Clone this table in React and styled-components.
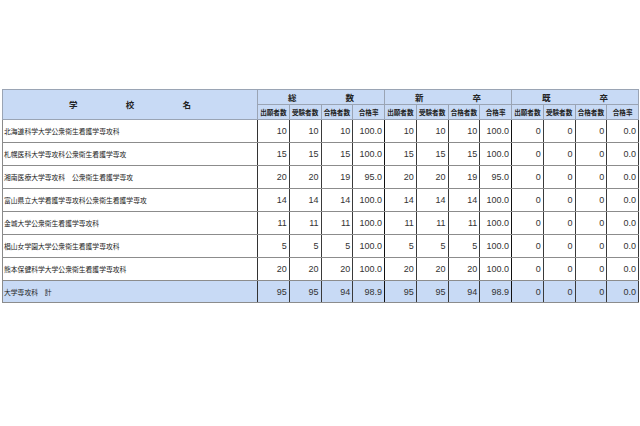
import styled, { createGlobalStyle } from "styled-components";

const GlobalStyle = createGlobalStyle`
  html, body {
    margin: 0;
    padding: 0;
    background: #ffffff;
  }
`;

const Page = styled.div`
  width: 640px;
  height: 426px;
  padding: 89px 0 0 2px;
  box-sizing: border-box;
  background: #fff;
`;

const Table = styled.table`
  border-collapse: collapse;
  table-layout: fixed;
  width: 637px;
  font-family: "Noto Sans CJK JP", "Liberation Sans", sans-serif;
  color: #222;
  border: 1px solid #8a8a8a;
`;

const HeadCell = styled.th`
  background: #c8daf5;
  border: 1px solid #9aa4b4;
  height: 14px;
  padding: 0;
  font-weight: bold;
  font-size: ${(p) => p.$size || 8}px;
  line-height: 1;
  white-space: nowrap;
  overflow: hidden;
`;

const Spread = styled.div`
  display: flex;
  justify-content: space-between;
  padding: 0 ${(p) => p.$pad}px;
`;

const Row = styled.tr`
  background: ${(p) => (p.$total ? "#c8daf5" : "#fff")};
`;

const NameCell = styled.td`
  border-top: 1px solid #8c8c8c;
  border-bottom: 1px solid #8c8c8c;
  border-right: 1px solid #333;
  height: ${(p) => p.$h || 22}px;
  padding: 0 0 0 1px;
  font-size: 6.8px;
  white-space: nowrap;
  overflow: hidden;
`;

const NumCell = styled.td`
  border-top: 1px solid #8c8c8c;
  border-bottom: 1px solid #8c8c8c;
  border-right: 1px solid ${(p) => (p.$groupEnd ? "#111" : "#3a3a3a")};
  padding: 0 2px 0 0;
  text-align: right;
  font-family: "Liberation Sans", sans-serif;
  font-size: 9px;
  color: #333;
  white-space: nowrap;
`;

const schools = [
  ["北海道科学大学公衆衛生看護学専攻科", [10, 10, 10, "100.0"], [10, 10, 10, "100.0"]],
  ["札幌医科大学専攻科公衆衛生看護学専攻", [15, 15, 15, "100.0"], [15, 15, 15, "100.0"]],
  ["湘南医療大学専攻科　公衆衛生看護学専攻", [20, 20, 19, "95.0"], [20, 20, 19, "95.0"]],
  ["富山県立大学看護学専攻科公衆衛生看護学専攻", [14, 14, 14, "100.0"], [14, 14, 14, "100.0"]],
  ["金城大学公衆衛生看護学専攻科", [11, 11, 11, "100.0"], [11, 11, 11, "100.0"]],
  ["椙山女学園大学公衆衛生看護学専攻科", [5, 5, 5, "100.0"], [5, 5, 5, "100.0"]],
  ["熊本保健科学大学公衆衛生看護学専攻科", [20, 20, 20, "100.0"], [20, 20, 20, "100.0"]],
];

const subHeads = ["出願者数", "受験者数", "合格者数", "合格率"];
const zeros = [0, 0, 0, "0.0"];

function DataRow({ name, values, total }) {
  return (
    <Row $total={total}>
      <NameCell $h={total ? 21 : 22}>{name}</NameCell>
      {values.map((v, i) => (
        <NumCell key={i} $groupEnd={i === 3 || i === 7}>
          {v}
        </NumCell>
      ))}
    </Row>
  );
}

export default function App() {
  return (
    <Page>
      <GlobalStyle />
      <Table>
        <colgroup>
          <col style={{ width: 255 }} />
          {Array.from({ length: 12 }).map((_, i) => (
            <col key={i} />
          ))}
        </colgroup>
        <thead>
          <tr>
            <HeadCell rowSpan={2} $size={8.5}>
              <Spread $pad={66}>
                <span>学</span>
                <span>校</span>
                <span>名</span>
              </Spread>
            </HeadCell>
            <HeadCell colSpan={4} $size={8.5}>
              <Spread $pad={30}>
                <span>総</span>
                <span>数</span>
              </Spread>
            </HeadCell>
            <HeadCell colSpan={4} $size={8.5}>
              <Spread $pad={30}>
                <span>新</span>
                <span>卒</span>
              </Spread>
            </HeadCell>
            <HeadCell colSpan={4} $size={8.5}>
              <Spread $pad={30}>
                <span>既</span>
                <span>卒</span>
              </Spread>
            </HeadCell>
          </tr>
          <tr>
            {[0, 1, 2].flatMap((g) =>
              subHeads.map((s) => (
                <HeadCell key={g + s} $size={6.6}>
                  {s}
                </HeadCell>
              ))
            )}
          </tr>
        </thead>
        <tbody>
          {schools.map(([name, all, fresh]) => (
            <DataRow key={name} name={name} values={[...all, ...fresh, ...zeros]} />
          ))}
          <DataRow
            total
            name="大学専攻科　計"
            values={[95, 95, 94, "98.9", 95, 95, 94, "98.9", ...zeros]}
          />
        </tbody>
      </Table>
    </Page>
  );
}
